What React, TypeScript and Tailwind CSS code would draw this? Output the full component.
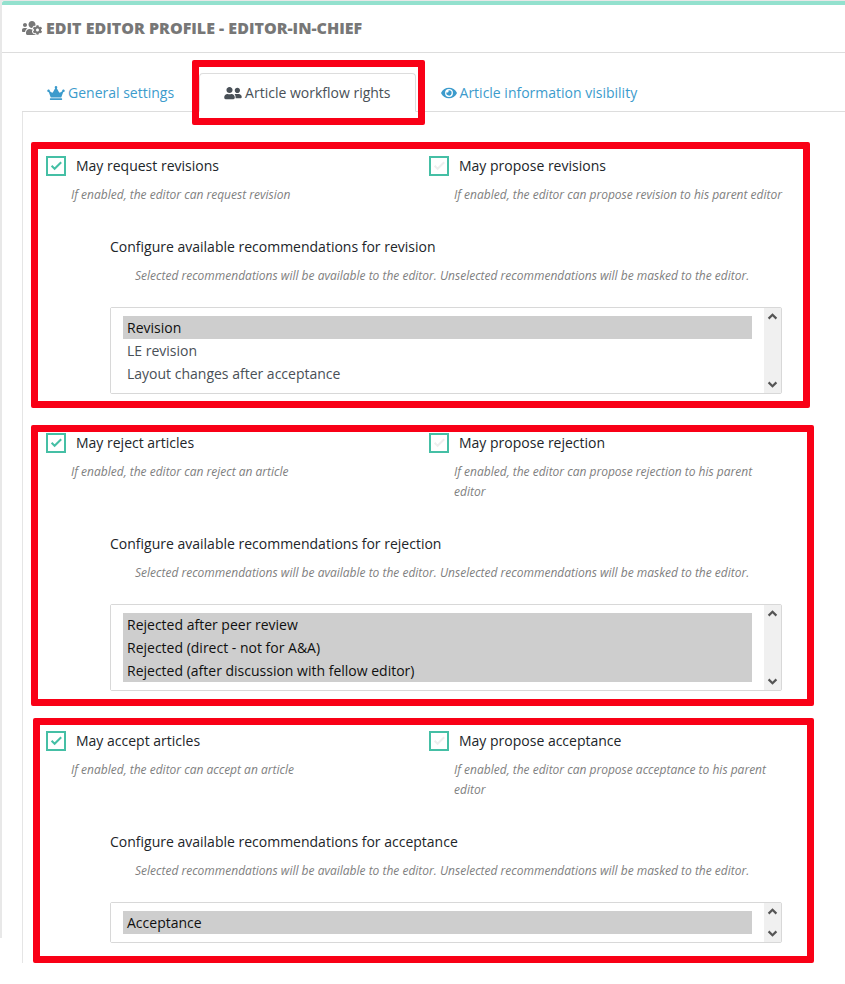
import React, { useState } from 'react';
import { FaCrown, FaEye, FaUserFriends, FaUsersCog } from 'react-icons/fa';
import { clsx } from 'clsx';

interface Right {
  id: string;
  label: string;
  help: string;
  checked: boolean;
}

interface RightGroup {
  id: string;
  // highlight frame and the padding that keeps all groups aligned
  frame: string;
  rights: Right[];
  title: string;
  options: string[];
  selected: string[];
}

const groups: RightGroup[] = [
  {
    id: 'revision',
    frame: 'ml-2 mr-[35px] pl-2 pr-[21px] pt-[7px] pb-[7px]',
    rights: [
      { id: 'request-revision', label: 'May request revisions', help: 'If enabled, the editor can request revision', checked: true },
      { id: 'propose-revision', label: 'May propose revisions', help: 'If enabled, the editor can propose revision to his parent editor', checked: false },
    ],
    title: 'Configure available recommendations for revision',
    options: ['Revision', 'LE revision', 'Layout changes after acceptance'],
    selected: ['Revision'],
  },
  {
    id: 'rejection',
    frame: 'mt-[17px] ml-2 mr-[31px] pl-2 pr-[25px] pt-px pb-2',
    rights: [
      { id: 'reject', label: 'May reject articles', help: 'If enabled, the editor can reject an article', checked: true },
      { id: 'propose-rejection', label: 'May propose rejection', help: 'If enabled, the editor can propose rejection to his parent editor', checked: false },
    ],
    title: 'Configure available recommendations for rejection',
    options: [
      'Rejected after peer review',
      'Rejected (direct - not for A&A)',
      'Rejected (after discussion with fellow editor)',
    ],
    selected: [
      'Rejected after peer review',
      'Rejected (direct - not for A&A)',
      'Rejected (after discussion with fellow editor)',
    ],
  },
  {
    id: 'acceptance',
    frame: 'mt-3 ml-[10px] mr-[31px] pl-[6px] pr-[25px] pt-[6px] pb-[13px]',
    rights: [
      { id: 'accept', label: 'May accept articles', help: 'If enabled, the editor can accept an article', checked: true },
      { id: 'propose-acceptance', label: 'May propose acceptance', help: 'If enabled, the editor can propose acceptance to his parent editor', checked: false },
    ],
    title: 'Configure available recommendations for acceptance',
    options: ['Acceptance'],
    selected: ['Acceptance'],
  },
];

const Help: React.FC<{ id: string; children: React.ReactNode }> = ({ id, children }) => (
  <p id={id} className="mt-[9px] ml-[25px] text-[12px] leading-5 italic text-[#808080]">
    {children}
  </p>
);

const RightCheckbox: React.FC<{ right: Right }> = ({ right }) => {
  const [checked, setChecked] = useState(right.checked);

  return (
    <div>
      <label className="flex items-center gap-[10px] text-sm leading-5 text-[#212529]">
        <span className="relative block size-5 shrink-0">
          <input
            type="checkbox"
            checked={checked}
            onChange={e => setChecked(e.target.checked)}
            aria-describedby={`${right.id}-help`}
            className="block size-5 appearance-none border-2 border-[#45bfa5] bg-white"
          />
          <svg
            viewBox="0 0 20 20"
            className={clsx(
              'pointer-events-none absolute inset-0 size-5 fill-none',
              checked ? 'stroke-[#45bfa5]' : 'stroke-[#eeeeee]'
            )}
            strokeWidth="2"
          >
            <path d="M5.6 9.8 8.6 12.8 15.2 6.2" />
          </svg>
        </span>
        {right.label}
      </label>
      <Help id={`${right.id}-help`}>{right.help}</Help>
    </div>
  );
};

const ScrollButton: React.FC<{ label: string; path: string }> = ({ label, path }) => (
  <button type="button" aria-label={label} className="flex size-[17px] items-center justify-center">
    <svg viewBox="0 0 17 17" className="size-[17px] fill-none stroke-[#555555]" strokeWidth="2.2">
      <path d={path} />
    </svg>
  </button>
);

const Recommendations: React.FC<{ group: RightGroup }> = ({ group }) => {
  const [selected, setSelected] = useState(group.selected);

  return (
    <div className="mt-8 pl-16">
      <label htmlFor={group.id} className="block text-sm leading-5 text-[#212529]">
        {group.title}
      </label>
      <Help id={`${group.id}-help`}>
        Selected recommendations will be available to the editor. Unselected recommendations will be masked to the editor.
      </Help>
      <div className="mt-[21px] flex rounded-xs border border-[#d8d8d8]">
        <select
          id={group.id}
          multiple
          size={group.options.length}
          value={selected}
          onChange={e => setSelected(Array.from(e.target.selectedOptions, o => o.value))}
          aria-describedby={`${group.id}-help`}
          className="block min-w-0 flex-1 overflow-hidden bg-white px-3 py-2 text-sm text-[#495057] outline-none"
        >
          {group.options.map(o => (
            <option key={o} value={o} className="h-[23px] px-1 pt-[2px] pb-0">
              {o}
            </option>
          ))}
        </select>
        <div className="flex w-[17px] flex-col justify-between bg-[#f0f0f0]">
          <ScrollButton label="Scroll up" path="M4.6 10.6 8.5 6.7 12.4 10.6" />
          <ScrollButton label="Scroll down" path="M4.6 6.4 8.5 10.3 12.4 6.4" />
        </div>
      </div>
    </div>
  );
};

const Tabs: React.FC = () => (
  <nav className="ml-5 mt-5 flex border-b border-[#dddddd] text-sm leading-5 text-[#3c9bcc]">
    <a href="#general" className="-mb-px flex items-center gap-[3px] border border-transparent px-6 pt-[9px] pb-2">
      <FaCrown className="h-[14px] w-[18px]" />
      General settings
    </a>
    <a
      href="#workflow"
      aria-current="page"
      className="relative -mb-px flex items-center gap-[3px] rounded-t border border-[#dddddd] border-b-white bg-white px-6 pt-[9px] pb-2 text-[#495057]"
    >
      <FaUserFriends className="h-[14px] w-[18px]" />
      Article workflow rights
      <span className="pointer-events-none absolute -top-[14px] -right-[10px] -bottom-[14px] -left-2 rounded-xs border-7 border-[#f90016]" />
    </a>
    <a href="#visibility" className="-mb-px flex items-center gap-[3px] border border-transparent px-6 pt-[9px] pb-2">
      <FaEye className="h-[14px] w-[16px]" />
      Article information visibility
    </a>
  </nav>
);

export default function App() {
  return (
    <div className="flex min-h-screen bg-white font-['Open_Sans','Noto_Sans',sans-serif]">
      <div className="mb-[46px] w-[2px] shrink-0 bg-[#e8e8e8]" />
      <main className="min-w-0 flex-1 border-t border-[#e8e8e8] pb-[21px]">
        <header className="rounded-tl-xs border-t-4 border-b border-t-[#93e1ce] border-b-[#dddddd] px-5 pt-[11px] pb-3">
          <h1 className="flex items-center gap-1 text-base leading-6 font-extrabold text-[#777777] uppercase">
            <FaUsersCog className="h-4 w-5" />
            Edit editor profile - Editor-in-chief
          </h1>
        </header>
        <Tabs />
        <div className="ml-5 border-l border-[#e5e5e5] pt-[30px]">
          {groups.map(group => (
            <section key={group.id} className={clsx('rounded-xs border-7 border-[#f90016]', group.frame)}>
              <div className="grid grid-cols-2 gap-x-[30px]">
                {group.rights.map(r => (
                  <RightCheckbox key={r.id} right={r} />
                ))}
              </div>
              <Recommendations group={group} />
            </section>
          ))}
        </div>
      </main>
    </div>
  );
}
